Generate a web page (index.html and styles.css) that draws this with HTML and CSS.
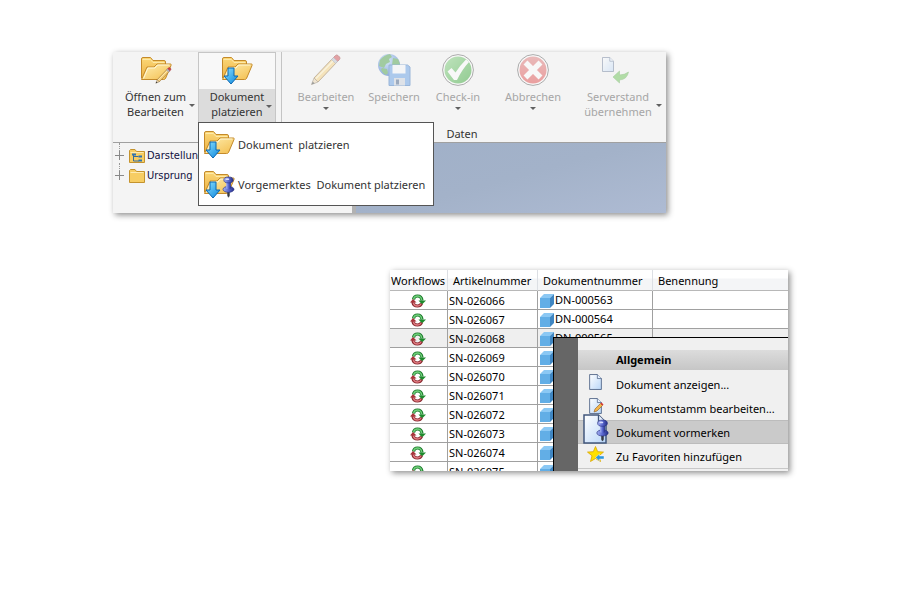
FILE: index.html
```html
<!DOCTYPE html>
<html lang="de">
<head>
<meta charset="utf-8">
<title>Dokument platzieren</title>
<link rel="stylesheet" href="styles.css">
</head>
<body>
<svg class="defs" aria-hidden="true">
  <defs>
    <linearGradient id="gFront" x1="0" y1="0" x2="1" y2="1"><stop offset="0" stop-color="#fff0b4"/><stop offset="1" stop-color="#f3bd4c"/></linearGradient>
    <linearGradient id="gBack" x1="0" y1="0" x2="0" y2="1"><stop offset="0" stop-color="#fbd878"/><stop offset="1" stop-color="#eeb244"/></linearGradient>
    <linearGradient id="gArrow" x1="0" y1="0" x2="1" y2="1"><stop offset="0" stop-color="#8be0ff"/><stop offset="1" stop-color="#0b86dc"/></linearGradient>
    <linearGradient id="gPage" x1="0" y1="0" x2="1" y2="1"><stop offset="0" stop-color="#ffffff"/><stop offset="1" stop-color="#b9d6f8"/></linearGradient>
    <linearGradient id="gPin" x1="0" y1="0" x2="1" y2="0"><stop offset="0" stop-color="#a9b4f4"/><stop offset=".5" stop-color="#5a68cf"/><stop offset="1" stop-color="#262f86"/></linearGradient>
    <linearGradient id="gGreen" x1="0" y1="0" x2="1" y2="1"><stop offset="0" stop-color="#7fd07a"/><stop offset="1" stop-color="#1c9a1c"/></linearGradient>
    <linearGradient id="gRed" x1="0" y1="0" x2="0" y2="1"><stop offset="0" stop-color="#dc7474"/><stop offset="1" stop-color="#e03a3a"/></linearGradient>
    <radialGradient id="gGlobe" cx=".4" cy=".3" r=".7"><stop offset="0" stop-color="#b8dcff"/><stop offset="1" stop-color="#1454c0"/></radialGradient>
    <symbol id="folder" viewBox="0 0 32 32">
      <path d="M1.500 24V5q0-1.500 1.500-1.500h7.500l2.500 3h11q1.500 0 1.500 1.500V24z" fill="url(#gBack)" stroke="#c48a2a"/>
      <path d="M2.500 5.500h8l2.500 3h11.500" fill="none" stroke="#fde9a9"/>
      <path d="M1.500 25.500l5.500-12.500h7l3-3h13.500q1 0 .5 1.500l-5.500 13q-.5 1-2 1z" fill="url(#gFront)" stroke="#c48a2a"/>
      <path d="M3.500 24.500l4.500-10.500h7l2.500-3h12" fill="none" stroke="#fff8d6"/>
    </symbol>
    <symbol id="arrow-down" viewBox="0 0 16 18">
      <path d="M5 1h6v8h4l-7 8-7-8h4z" fill="url(#gArrow)" stroke="#0b67b2"/>
    </symbol>
    <symbol id="pencil" viewBox="0 0 32 32">
      <path d="M4 24L23 4l4 4L8 28z" fill="#f7cf76" stroke="#8c6a3a"/>
      <path d="M6 24.500L24 6" stroke="#fff0bf" stroke-width="1.500"/>
      <path d="M23 4l2.500-2.500q1-1 2.500 0l1.500 1.500q1 1 0 2.500L27 8z" fill="#cf3d44" stroke="#9a3438"/>
      <path d="M21.500 5.500l4 4L27.500 7.500l-4-4z" fill="#b6bccb" stroke="#7b8190" stroke-width=".6"/>
      <path d="M4 24l4 4-6.500 2.500z" fill="#e9d2a8" stroke="#7a6548" stroke-width=".7"/>
      <path d="M1.500 30.500l1.200-3 2 2z" fill="#333"/>
    </symbol>
    <symbol id="pin" viewBox="0 0 16 28">
      <path d="M7 19h2v6l-1 2-1-2z" fill="#3a3d45" stroke="#3a3d45"/>
      <ellipse cx="8" cy="17" rx="7" ry="3.800" fill="url(#gPin)" stroke="#27307e" stroke-width=".8"/>
      <path d="M5 5h6v11q-3 1.500-6 0z" fill="url(#gPin)"/>
      <ellipse cx="8" cy="5" rx="6" ry="3.800" fill="url(#gPin)" stroke="#27307e" stroke-width=".8"/>
      <ellipse cx="6.500" cy="4" rx="2.500" ry="1.200" fill="#d8ddff"/>
    </symbol>
    <symbol id="page" viewBox="0 0 24 30">
      <path d="M1 1h14.500l7.500 7.500V29H1z" fill="url(#gPage)" stroke="#41577c" stroke-width="1.500"/>
      <path d="M15.500 1v7.500H23" fill="#e8f1ff" stroke="#41577c" stroke-width="1.300"/>
    </symbol>
    <symbol id="cube" viewBox="0 0 14 14">
      <path d="M0 4l4-4h10l-4 4z" fill="#8bc8f4"/>
      <path d="M0 4h10v10H0z" fill="#62aee6"/>
      <path d="M10 4l4-4v10l-4 4z" fill="#3f86c2"/>
    </symbol>
    <symbol id="cycle" viewBox="0 0 16 14">
      <path d="M3.500 5.500Q4 2 7.500 2q4 0 4.500 4.500" fill="none" stroke="#1d7a2c" stroke-width="3.200"/>
      <path d="M3.500 5Q4.500 2 7.500 2q3.500 0 4.300 4" fill="none" stroke="#6fd07a" stroke-width="1.300"/>
      <path d="M8.500 6.500H16L12 10.500z" fill="#1d8a2c"/>
      <path d="M11.500 9.500Q10.500 12 7.500 12 3.500 12 2.800 8" fill="none" stroke="#8a2a30" stroke-width="3.200"/>
      <path d="M11 10Q10 12 7.500 12 4 12 3.200 8.500" fill="none" stroke="#e07a80" stroke-width="1.300"/>
      <path d="M0 8.500h6.500L3 5z" fill="#a8333a"/>
    </symbol>
  </defs>
</svg>

<main class="page">
  <section class="panel ribbon-window">
    <div class="ribbon">
      <button class="tool tool-open" type="button">
        <svg class="icon-lg" viewBox="0 0 32 32"><use href="#folder"/><use href="#pencil" x="15" y="13" width="17" height="17"/></svg>
        <span class="label">Öffnen zum<br>Bearbeiten</span>
        <span class="caret caret-side"></span>
      </button>
      <div class="split">
        <button class="tool tool-active" type="button" aria-expanded="true">
          <svg class="icon-lg" viewBox="0 0 32 32"><use href="#folder"/><use href="#arrow-down" x="2" y="13" width="16" height="18"/></svg>
          <span class="label">Dokument<br>platzieren</span>
          <span class="caret caret-side"></span>
        </button>
        <div class="menu">
          <button class="menu-item" type="button">
            <svg class="icon-lg" viewBox="0 0 32 32"><use href="#folder"/><use href="#arrow-down" x="2" y="13" width="16" height="18"/></svg>
            <span>Dokument&nbsp; platzieren</span>
          </button>
          <button class="menu-item" type="button">
            <svg class="icon-lg" viewBox="0 0 32 32"><use href="#folder"/><use href="#arrow-down" x="2" y="13" width="16" height="18"/><use href="#pin" x="19" y="8" width="13" height="22"/></svg>
            <span>Vorgemerktes&nbsp; Dokument platzieren</span>
          </button>
        </div>
      </div>
      <div class="group">
        <div class="tools">
          <button class="tool" type="button" disabled>
            <svg class="icon-lg" viewBox="0 0 32 32"><use href="#pencil"/></svg>
            <span class="label">Bearbeiten</span><span class="caret"></span>
          </button>
          <button class="tool" type="button" disabled>
            <svg class="icon-lg" viewBox="0 0 32 32">
              <circle cx="11" cy="11" r="11" fill="url(#gGlobe)"/>
              <path d="M2 6q4-5 10-6l2 3-3 2 1 3-4 2-2 4-5-2zM15 4l5 1 2 5-3 4-5-3zM4 14l5 1 1 4-2 2q-4-2-5-6z" fill="#3f9b3c"/>
              <path d="M11 11h18.500l2.500 2V31.500H11z" fill="#5796e3" stroke="#2f6cba"/>
              <path d="M14.500 11h13v8.500h-13z" fill="#f4f7fc"/>
              <path d="M16 24h11v7.500H16z" fill="#c4cddb"/><path d="M18 25.500h3v5h-3z" fill="#33527f"/>
            </svg>
            <span class="label">Speichern</span>
          </button>
          <button class="tool" type="button" disabled>
            <svg class="icon-lg" viewBox="0 0 32 32">
              <circle cx="16" cy="16" r="15.400" fill="#fff" stroke="#555"/><circle cx="16" cy="16" r="13.500" fill="url(#gGreen)"/>
              <path d="M5.500 17.500l4-3.500 4 4.500Q18 11.500 24 5.500l3 2.500Q20 15.500 15 26h-3z" fill="#fff"/>
            </svg>
            <span class="label">Check-in</span><span class="caret"></span>
          </button>
          <button class="tool" type="button" disabled>
            <svg class="icon-lg" viewBox="0 0 32 32">
              <circle cx="16" cy="16" r="15.400" fill="#fff" stroke="#555"/><circle cx="16" cy="16" r="13.500" fill="url(#gRed)"/>
              <path d="M8.500 8.500l15 15M23.500 8.500l-15 15" stroke="#fff" stroke-width="5.500"/>
            </svg>
            <span class="label">Abbrechen</span><span class="caret"></span>
          </button>
          <button class="tool" type="button" disabled>
            <svg class="icon-lg" viewBox="0 0 32 32">
              <use href="#page" x="0" y="3" width="12" height="15"/>
              <path d="M11 23l6.500-6v4q5 0 9-3-1.500 7.500-9 8v3z" fill="#62c14a" stroke="#4d9d3c" stroke-width=".6"/>
            </svg>
            <span class="label">Serverstand<br>übernehmen</span><span class="caret caret-side"></span>
          </button>
        </div>
        <div class="group-title">Daten</div>
      </div>
    </div>
    <div class="workspace">
      <ul class="tree">
        <li>
          <svg class="icon-sm" viewBox="0 0 16 16"><path d="M.5 14.500v-12l1-1H6l1.500 2h8v11z" fill="#f7cd63" stroke="#c4932e"/><path d="M1.500 4.500h13" stroke="#fdeab0"/><path d="M4.500 6v7H10M4.500 8.500h5" fill="none" stroke="#356b9d"/><path d="M3 5.500h4v2H3zM9.500 7.500H13v2H9.500zM9.500 11.500H13v2H9.500z" fill="#2d74b5"/></svg>
          <span>Darstellung</span>
        </li>
        <li>
          <svg class="icon-sm" viewBox="0 0 16 16"><path d="M.5 14.500v-12l1-1H6l1.500 2h8v11z" fill="#f7cd63" stroke="#c4932e"/><path d="M1.500 4.500h13" stroke="#fdeab0"/></svg>
          <span>Ursprung</span>
        </li>
      </ul>
      <div class="canvas"></div>
    </div>
  </section>

  <section class="panel list-window">
    <div class="viewport">
      <table>
        <colgroup><col class="c-flow"><col class="c-article"><col class="c-doc"><col></colgroup>
        <thead><tr><th class="th-flow">Workflows</th><th>Artikelnummer</th><th>Dokumentnummer</th><th>Benennung</th></tr></thead>
        <tbody>
          <tr><td class="flow"><svg><use href="#cycle"/></svg></td><td>SN-026066</td><td><svg class="cube"><use href="#cube"/></svg>DN-000563</td><td></td></tr>
          <tr><td class="flow"><svg><use href="#cycle"/></svg></td><td>SN-026067</td><td><svg class="cube"><use href="#cube"/></svg>DN-000564</td><td></td></tr>
          <tr class="selected"><td class="flow"><svg><use href="#cycle"/></svg></td><td>SN-026068</td><td><svg class="cube"><use href="#cube"/></svg>DN-000565</td><td></td></tr>
          <tr><td class="flow"><svg><use href="#cycle"/></svg></td><td>SN-026069</td><td><svg class="cube"><use href="#cube"/></svg></td><td></td></tr>
          <tr><td class="flow"><svg><use href="#cycle"/></svg></td><td>SN-026070</td><td><svg class="cube"><use href="#cube"/></svg></td><td></td></tr>
          <tr><td class="flow"><svg><use href="#cycle"/></svg></td><td>SN-026071</td><td><svg class="cube"><use href="#cube"/></svg></td><td></td></tr>
          <tr><td class="flow"><svg><use href="#cycle"/></svg></td><td>SN-026072</td><td><svg class="cube"><use href="#cube"/></svg></td><td></td></tr>
          <tr><td class="flow"><svg><use href="#cycle"/></svg></td><td>SN-026073</td><td><svg class="cube"><use href="#cube"/></svg></td><td></td></tr>
          <tr><td class="flow"><svg><use href="#cycle"/></svg></td><td>SN-026074</td><td><svg class="cube"><use href="#cube"/></svg></td><td></td></tr>
          <tr><td class="flow"><svg><use href="#cycle"/></svg></td><td>SN-026075</td><td><svg class="cube"><use href="#cube"/></svg></td><td></td></tr>
        </tbody>
      </table>
    </div>
    <div class="context-menu">
      <div class="context-body">
        <h2>Allgemein</h2>
        <button type="button"><svg class="icon-sm" viewBox="0 0 16 16"><use href="#page" x="1" y="-2" width="13" height="16"/></svg><span>Dokument anzeigen...</span></button>
        <button type="button"><svg class="icon-sm" viewBox="0 0 16 16"><use href="#page" x="1" y="-2" width="13" height="16"/><path d="M6 12l1-3 5.500-5.500 2 2L9 11z" fill="#f4b54a" stroke="#8a5a22" stroke-width=".6"/><path d="M12.500 3.500l1-1 2 2-1 1z" fill="#d33"/></svg><span>Dokumentstamm bearbeiten...</span></button>
        <button type="button" class="hover"><svg class="icon-pin" viewBox="0 0 26 30"><use href="#page" x="0" y="0" width="24" height="30"/><use href="#pin" x="13" y="5" width="13" height="23"/></svg><span>Dokument vormerken</span></button>
        <button type="button"><svg class="icon-sm" viewBox="0 0 16 16"><path d="M7.500-1.500l2.200 5.200 5.800.4-4.500 3.700 1.500 5.700-5-3-5 3L4 7.800-.5 4.100l5.800-.4z" fill="#ffe100" stroke="#d9a400" stroke-width=".8"/><path d="M7.500 9.500l4-3.500v2H16v3h-4.500v2z" fill="#2f97dc" stroke="#fff" stroke-width=".4"/></svg><span>Zu Favoriten hinzufügen</span></button>
        <hr>
      </div>
    </div>
  </section>
</main>
</body>
</html>
```

FILE: styles.css
```css
* { box-sizing: border-box; }

body {
  margin: 0;
  background: #fff;
  color: #333;
  font: 11px/15px "Noto Sans", "Open Sans", sans-serif;
}

button {
  margin: 0;
  padding: 0;
  border: 0;
  background: none;
  color: inherit;
  font: inherit;
}

svg { flex: none; overflow: visible; }

.defs { position: absolute; width: 0; height: 0; }

.page {
  display: flex;
  flex-direction: column;
  gap: 57px;
  padding: 52px 112px 16px 113px;
}

.panel {
  position: relative;
  box-shadow: 2px 2px 6px rgba(0, 0, 0, .45);
}

.ribbon-window { margin-right: 122px; background: #f4f4f4; }

.ribbon {
  display: flex;
  height: 91px;
  border-bottom: 1px solid #a0a0a0;
}

.tool {
  position: relative;
  display: flex;
  flex-direction: column;
  align-items: center;
  width: 100%;
  height: 71px;
  padding-top: 2px;
}

.tool.tool-open { width: 85px; }

.tool.tool-active {
  border: 1px solid #c6c6c6;
  border-bottom: 0;
  padding-top: 1px;
  background: linear-gradient(#f8f8f8 36px, #dcdcdc 36px);
}

.tool:disabled { color: #a6a6a6; }
.tool:disabled .icon-lg { opacity: .45; }

.icon-lg { width: 32px; height: 32px; }
.icon-sm { width: 16px; height: 16px; }

.label { margin-top: 3px; white-space: nowrap; }

.caret {
  margin-top: 3px;
  border: 3px solid transparent;
  border-top-color: #606060;
  border-bottom: 0;
}

.caret-side { position: absolute; top: 49px; right: 3px; }

.split { position: relative; width: 78px; }

.menu {
  position: absolute;
  z-index: 2;
  top: 70px;
  left: 0;
  width: 236px;
  padding: 1px 4px;
  border: 1px solid #555;
  background: #fff;
}

.menu-item {
  display: flex;
  align-items: center;
  gap: 3px;
  width: 100%;
  height: 40px;
  white-space: nowrap;
}

.group {
  flex: 1;
  margin-left: 5px;
  padding-left: 10px;
  border-left: 1px solid #c4c4c4;
}

.tools { display: grid; grid-template-columns: 68fr 68fr 60fr 90fr 80fr; padding-right: 8px; }

.tools .caret-side { right: -4px; }

.group-title { padding-right: 34px; line-height: 21px; text-align: center; }

.workspace { display: flex; height: 70px; }

.tree {
  width: 243px;
  margin: 0;
  padding: 3px 0 0 16px;
  border-right: 4px solid #b2b2b2;
  list-style: none;
  color: #101040;
  font: 11px/20px "DejaVu Sans Condensed", "DejaVu Sans", sans-serif;
}

.tree li { position: relative; display: flex; align-items: center; gap: 2px; height: 20px; }

.tree li::before {
  content: "";
  position: absolute;
  top: 5px;
  left: -14px;
  width: 9px;
  height: 9px;
  background: linear-gradient(#888, #888) center / 9px 1px no-repeat, linear-gradient(#888, #888) center / 1px 9px no-repeat;
}

.tree li::after {
  content: "";
  position: absolute;
  top: -3px;
  left: -10px;
  width: 8px;
  height: 8px;
  border-left: 1px dotted #999;
}

.canvas { flex: 1; background: linear-gradient(165deg, #a0b0c8, #a3b2c9 50%, #aebbd3); }

.list-window {
  margin-left: 277px;
  background: #fff;
  color: #000;
}

.viewport { height: 201px; overflow: hidden; }

table { width: 100%; border-collapse: separate; border-spacing: 0; table-layout: fixed; }
.c-flow { width: 58px; }
.c-article { width: 90px; }
.c-doc { width: 115px; }

th, td {
  overflow: hidden;
  padding: 0 0 0 1px;
  text-align: left;
  white-space: nowrap;
}

th {
  height: 21px;
  padding-left: 5px;
  border-right: 1px solid #dcdfe4;
  border-bottom: 1px solid #b8b8b8;
  background: linear-gradient(#fff 40%, #f4f5f7 45%);
  font-weight: 400;
}

.th-flow { padding-left: 1px; }

td {
  height: 19px;
  border-right: 1px solid #a0a0a0;
  border-bottom: 1px solid #a0a0a0;
}

th:last-child, td:last-child { border-right: 0; }
td svg { width: 16px; height: 14px; vertical-align: middle; }
td .cube { width: 14px; height: 14px; margin: 0 1px; }
.flow { padding-right: 3px; text-align: center; }
.selected { background: #efefef; }

.context-menu {
  position: absolute;
  top: 67px;
  right: 0;
  bottom: 0;
  left: 163px;
  padding-left: 24px;
  border-top: 1px solid #000;
  border-left: 1px solid #000;
  background: #666;
}

.context-body { height: 100%; padding-top: 12px; background: #f0f0f0; overflow: hidden; }

.context-body h2 {
  margin: 0 0 2px;
  padding-left: 38px;
  background: linear-gradient(#dcdcdc, #c6c6c6);
  font-size: 11px;
  line-height: 20px;
}

.context-body button {
  display: grid;
  grid-template-columns: 34px 1fr;
  align-items: center;
  justify-items: center;
  width: 100%;
  height: 24px;
  padding-left: 1px;
  white-space: nowrap;
}

.context-body button span { justify-self: start; padding-left: 3px; }
.context-body .hover { background: #cacaca; box-shadow: inset 0 1px #bcbcbc, inset 0 -1px #bcbcbc; }
.context-body hr { margin: 0; border: 0; border-top: 1px solid #c8c8c8; }
.icon-pin { width: 26px; height: 30px; margin-top: -6px; }
```
